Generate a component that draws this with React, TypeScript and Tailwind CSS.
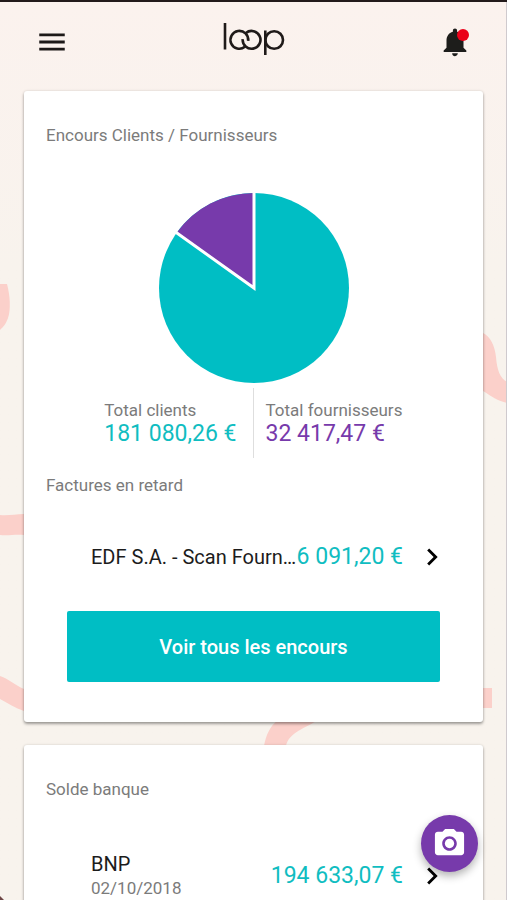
import type { ReactNode } from "react";
import { MdChevronRight, MdMenu, MdNotifications, MdPhotoCamera } from "react-icons/md";

const CLIENTS = 181080.26;
const FOURNISSEURS = 32417.47;

function Logo() {
  return (
    <svg
      viewBox="0.7 0 62 34"
      className="h-[34px] w-[62px]"
      fill="none"
      stroke="#1f1a19"
      strokeWidth="2.6"
      role="img"
      aria-label="loop"
    >
      <path d="M2.700 1v26.500" />
      <path d="M25.900 18.800A8.900 8.900 0 1 0 22.600 24.800" />
      <path d="M20.400 17.200A8.900 8.900 0 1 0 23.600 11" />
      <path d="M43 8.500v24.500" />
      <circle cx="51.900" cy="18" r="8.800" />
    </svg>
  );
}

function Squiggles() {
  return (
    <div className="pointer-events-none absolute inset-0 overflow-hidden" aria-hidden="true">
      <svg viewBox="0 0 507 900" className="h-[900px] w-full" preserveAspectRatio="none" fill="#fbd0ca">
        <path d="M0 282h7c3 11 4 25 1 34-2 6-5 9-8 12z" />
        <path d="M0 513c8 1 15-1 24-1v21c-9-1-15 1-24 0z" />
        <path d="M0 674c9 3 15 9 24 13v22c-9-3-16-8-24-12z" />
        <path d="M483 331c7 3 12 13 13 24 1 13 4 21 11 25v21c-9-2-16-7-24-12z" />
        <path d="M483 686h9v20h-9z" />
        <path d="M264 744c2-11 6-20 14-26h40c-12 8-29 12-32 26z" />
        <path d="M0 894l4 4H0z" fill="#6d4545" />
      </svg>
    </div>
  );
}

function PieChart() {
  const angle = (CLIENTS / (CLIENTS + FOURNISSEURS)) * 2 * Math.PI;
  const x = 96 + 95 * Math.sin(angle);
  const y = 96 - 95 * Math.cos(angle);

  return (
    <svg viewBox="0 0 192 192" className="mx-auto block size-48" role="img" aria-label="Encours">
      <circle cx="96" cy="96" r="95" fill="#00bec4" />
      <path d={`M96 96L${x} ${y}A95 95 0 0 1 96 1Z`} fill="#773aab" />
      <path d={`M96 0V96L${x - 1} ${y - 1}`} fill="none" stroke="#fff" strokeWidth="3" />
    </svg>
  );
}

function Card({ title, children }: { title: string; children: ReactNode }) {
  return (
    <section className="rounded-[3px] bg-white px-[22px] pt-8 pb-10 shadow-[0_2px_3px_rgba(0,0,0,0.35),0_0_3px_rgba(0,0,0,0.12)]">
      <h2 className="text-[17px] leading-6 text-[#7b7b7b]">{title}</h2>
      {children}
    </section>
  );
}

interface RowProps {
  label: string;
  date?: string;
  amount: string;
}

function Row({ label, date, amount }: RowProps) {
  return (
    <a href="#" className="flex items-center justify-between pr-3 pl-[45px]">
      <div>
        <p className="text-[20px] leading-6 whitespace-nowrap text-[#1c1c1c]">{label}</p>
        {date && <p className="text-[17px] leading-6 text-[#7b7b7b]">{date}</p>}
      </div>
      <div className="flex items-center gap-3">
        <span className="text-[23px] leading-8 whitespace-nowrap text-[#10bdc1]">{amount}</span>
        <MdChevronRight className="size-[34px] shrink-0 text-black" />
      </div>
    </a>
  );
}

export default function App() {
  return (
    <div className="relative h-screen overflow-hidden border-t-2 border-[#231a1b] bg-[#f8f3ed] bg-linear-to-b from-[#fbf2ee] to-[#f8f3ed] to-30% font-[Roboto,sans-serif]">
      <Squiggles />
      <div className="absolute inset-y-0 right-0 w-px bg-[#cfcace]" />

      <header className="relative flex items-start justify-between px-[35px] pt-5">
        <button type="button" aria-label="Menu" className="mt-[3px]">
          <MdMenu className="size-[34px] text-[#1d1918]" />
        </button>
        <Logo />
        <button type="button" aria-label="Notifications" className="relative mt-[3px]">
          <MdNotifications className="size-[34px] text-[#1d1d1b]" />
          <span className="absolute top-1 right-[3px] size-3 rounded-full bg-[#ea0019]" />
        </button>
      </header>

      <main className="relative mx-6 mt-8 space-y-[23px]">
        <Card title="Encours Clients / Fournisseurs">
          <div className="mt-[45px]">
            <PieChart />
          </div>

          <div className="mt-1 grid grid-cols-2">
            <div className="flex justify-end border-r border-[#dedede] pt-[10px] pr-4 pb-3">
              <div>
                <p className="text-[17px] leading-6 text-[#7b7b7b]">Total clients</p>
                <p className="text-[23px] leading-6 whitespace-nowrap text-[#10bdc1]">181 080,26 €</p>
              </div>
            </div>
            <div className="pt-[10px] pb-3 pl-3">
              <p className="text-[17px] leading-6 text-[#7b7b7b]">Total fournisseurs</p>
              <p className="text-[23px] leading-6 whitespace-nowrap text-[#773aab]">32 417,47 €</p>
            </div>
          </div>

          <h2 className="mt-[15px] mb-[43px] text-[17px] leading-6 text-[#7b7b7b]">Factures en retard</h2>
          <Row label="EDF S.A. - Scan Fourn…" amount="6 091,20 €" />

          <button
            type="button"
            className="mx-[21px] mt-[37px] block h-[71px] w-[calc(100%-42px)] rounded-[2px] bg-[#00bec4] text-[20px] font-medium text-white"
          >
            Voir tous les encours
          </button>
        </Card>

        <Card title="Solde banque">
          <div className="mt-[51px]">
            <Row label="BNP" date="02/10/2018" amount="194 633,07 €" />
          </div>
        </Card>
      </main>

      <button
        type="button"
        aria-label="Prendre une photo"
        className="fixed right-[29px] bottom-7 flex size-[57px] items-center justify-center rounded-full bg-[#773aab] shadow-[0_4px_8px_rgba(0,0,0,0.3)]"
      >
        <MdPhotoCamera className="size-[35px] text-white" />
      </button>
    </div>
  );
}
